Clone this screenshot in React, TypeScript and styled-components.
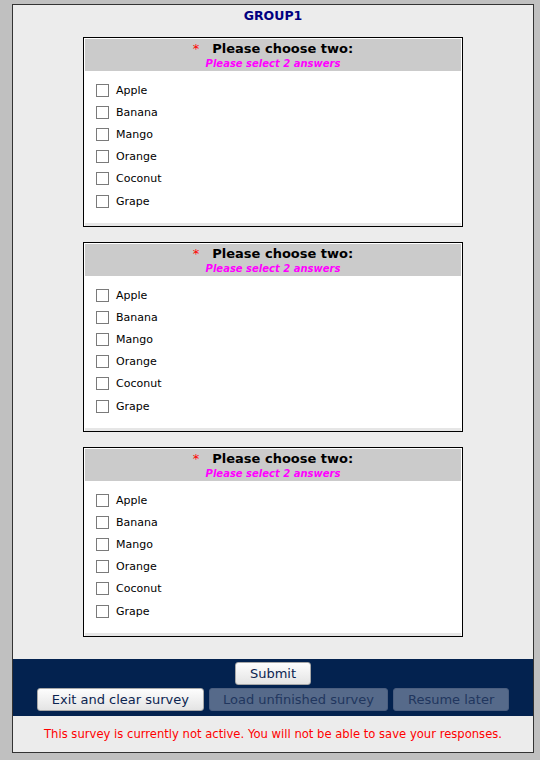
import React from "react";
import styled, { createGlobalStyle } from "styled-components";

const GlobalStyle = createGlobalStyle`
  body {
    margin: 0;
    background: #c0c0c0;
    font-family: "DejaVu Sans", Verdana, sans-serif;
  }
`;

const choices = ["Apple", "Banana", "Mango", "Orange", "Coconut", "Grape"];

const Question = () => (
  <QuestionBox>
    <QuestionHead>
      <QuestionTitle>
        <Asterisk>*</Asterisk>Please choose two:
      </QuestionTitle>
      <Hint>Please select 2 answers</Hint>
    </QuestionHead>
    <ChoiceList>
      {choices.map((c) => (
        <Choice key={c}>
          <Box />
          <span>{c}</span>
        </Choice>
      ))}
    </ChoiceList>
    <BottomBand />
  </QuestionBox>
);

export default function App() {
  return (
    <>
      <GlobalStyle />
      <Survey>
        <GroupTitle>GROUP1</GroupTitle>
        <Questions>
          <Question />
          <Question />
          <Question />
        </Questions>
        <NavBar>
          <Button>Submit</Button>
          <ButtonRow>
            <Button>Exit and clear survey</Button>
            <Button disabled>Load unfinished survey</Button>
            <Button disabled>Resume later</Button>
          </ButtonRow>
        </NavBar>
        <Warning>
          This survey is currently not active. You will not be able to save
          your responses.
        </Warning>
      </Survey>
    </>
  );
}

const Survey = styled.div`
  box-sizing: border-box;
  margin: 4px 0 0 12px;
  width: 522px;
  height: 749px;
  border: 1px solid #333;
  background: #ececec;
  display: flex;
  flex-direction: column;
`;

const GroupTitle = styled.div`
  text-align: center;
  font-weight: bold;
  font-size: 12.5px;
  color: #000080;
  padding-top: 3px;
  height: 28px;
  line-height: 16px;
  box-sizing: border-box;
`;

const Questions = styled.div`
  display: flex;
  flex-direction: column;
  align-items: center;
  gap: 15px;
  padding-top: 4px;
`;

const QuestionBox = styled.div`
  box-sizing: border-box;
  width: 380px;
  height: 190px;
  border: 1px solid #000;
  background: #fff;
  padding: 1px 1px 0;
  display: flex;
  flex-direction: column;
`;

const QuestionHead = styled.div`
  height: 32px;
  background: #cbcbcb;
  text-align: center;
  padding-top: 1px;
  box-sizing: border-box;
`;

const QuestionTitle = styled.div`
  font-weight: bold;
  font-size: 13px;
  line-height: 18px;
  color: #000;
`;

const Asterisk = styled.span`
  color: #ff0000;
  font-weight: normal;
  margin-right: 13px;
`;

const Hint = styled.div`
  font-size: 10px;
  font-weight: bold;
  font-style: italic;
  color: #ff00ff;
  line-height: 11px;
`;

const ChoiceList = styled.div`
  flex: 1;
  padding: 8px 0 0 11px;
`;

const Choice = styled.div`
  display: flex;
  align-items: center;
  height: 22.2px;
  gap: 7px;
  font-size: 11px;
  color: #000;
`;

const Box = styled.span`
  box-sizing: border-box;
  width: 13px;
  height: 13px;
  border: 1px solid #7a7a7a;
  background: #fff;
`;

const BottomBand = styled.div`
  height: 3px;
  background: #e6e6e6;
`;

const NavBar = styled.div`
  margin-top: 22px;
  background: #03224f;
  padding: 3px 0 5px;
  display: flex;
  flex-direction: column;
  align-items: center;
  gap: 3px;
`;

const ButtonRow = styled.div`
  display: flex;
  gap: 5px;
`;

const Button = styled.button`
  box-sizing: border-box;
  height: 23px;
  padding: 0 13.5px;
  border-radius: 3px;
  font-family: "DejaVu Sans", Verdana, sans-serif;
  font-size: 13px;
  color: #0b2450;
  border: 1px solid #a8a8a8;
  background: linear-gradient(#fdfdfd, #e4e4e4);

  &:disabled {
    background: #566a8a;
    border-color: #4b5e7f;
    color: #21365e;
  }
`;

const Warning = styled.div`
  text-align: center;
  color: #ff0000;
  font-size: 11.6px;
  padding-top: 11px;
`;
